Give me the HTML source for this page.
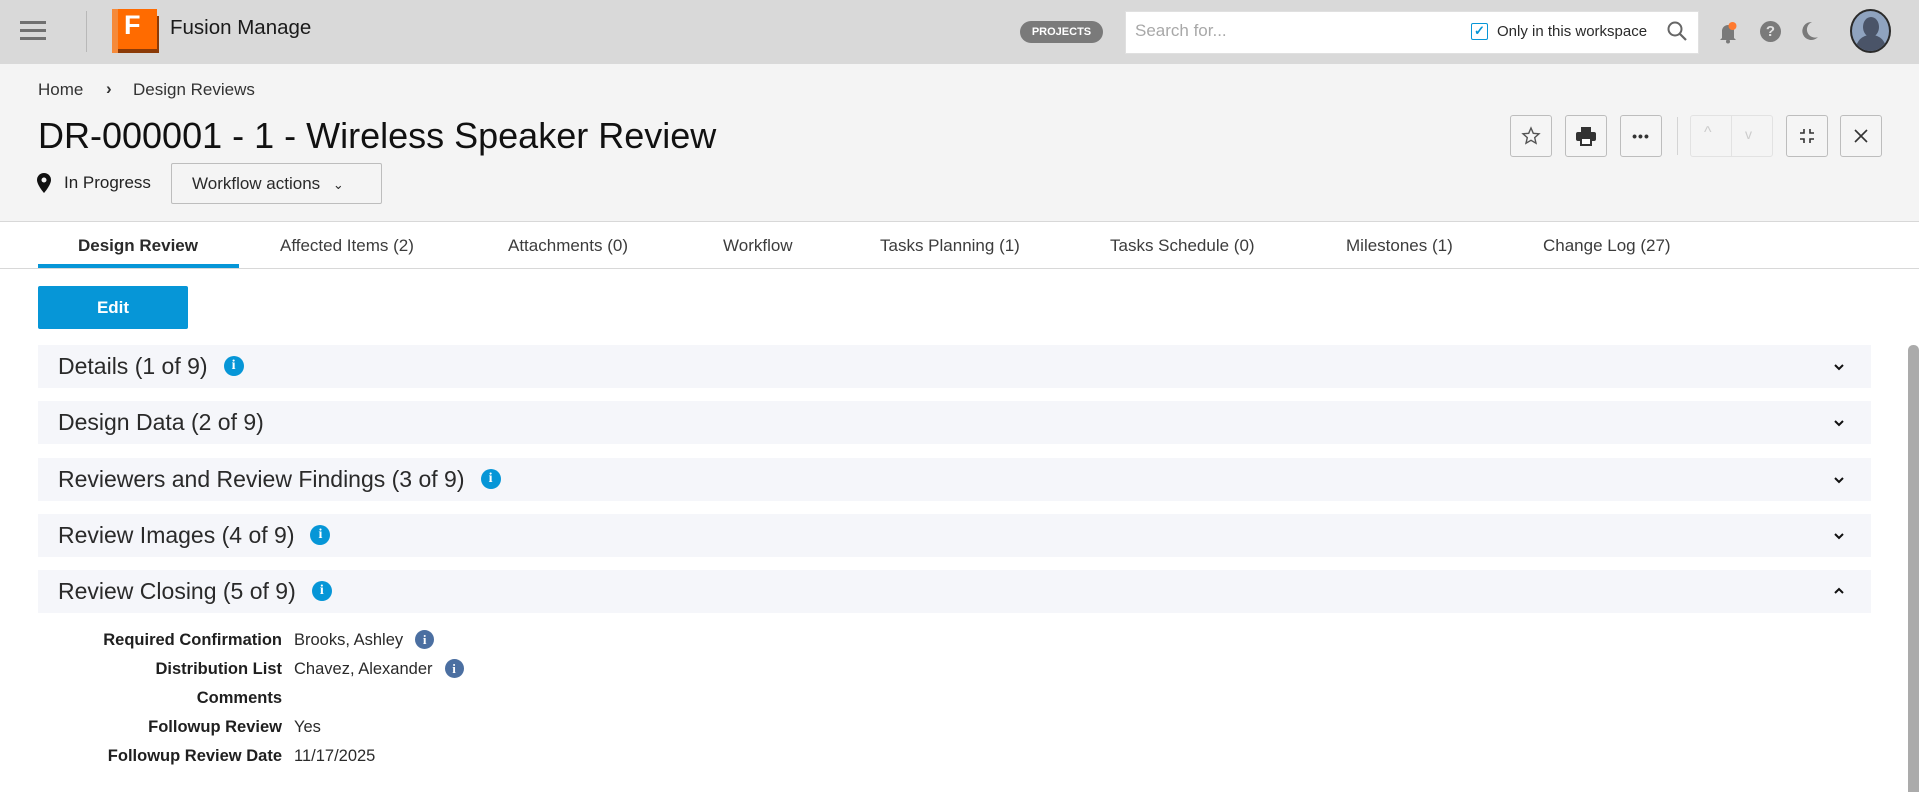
<!DOCTYPE html>
<html><head><meta charset="utf-8"><style>
*{box-sizing:border-box;margin:0;padding:0}
body{width:1919px;height:792px;overflow:hidden;background:#fff;font-family:"Liberation Sans",sans-serif;color:#1f1f1f;position:relative}
.a{position:absolute}
.top{left:0;top:0;width:1919px;height:64px;background:#d9d9d9}
.sub{left:0;top:64px;width:1919px;height:158px;background:#f4f4f4;border-bottom:1px solid #d8d8d8}
.btn{position:absolute;top:115px;width:42px;height:42px;border:1px solid #bdbdbd;border-radius:3px;background:#f5f5f5;display:flex;align-items:center;justify-content:center}
.tab{position:absolute;top:236px;font-size:17px;color:#3c3c3c;white-space:nowrap}
.sec{position:absolute;left:38px;width:1833px;height:43px;background:#f5f6fa;font-size:23px;color:#2a2a2a;padding-left:20px;line-height:43px;white-space:nowrap}
.info{display:inline-block;width:20px;height:20px;border-radius:50%;background:#0696d7;color:#fff;font-size:14px;font-weight:bold;line-height:20px;text-align:center;vertical-align:middle;margin-left:16px;margin-top:-4px;font-family:"Liberation Serif",serif}
.chev{position:absolute;left:1833px;width:12px;height:12px}
.lab{position:absolute;right:1637px;font-size:16.5px;line-height:20px;color:#1f1f1f;font-weight:bold;white-space:nowrap}
.val{position:absolute;left:294px;font-size:16.5px;line-height:20px;color:#2a2a2a;white-space:nowrap}
.di{display:inline-block;width:19px;height:19px;border-radius:50%;background:#4b6fa1;color:#fff;font-size:13px;font-weight:bold;line-height:19px;text-align:center;margin-left:12px;vertical-align:middle;margin-top:-3px;font-family:"Liberation Serif",serif}
</style></head><body>
<div class="a top"></div>
<div class="a" style="left:20px;top:21px;width:26px;height:3px;background:#707070;box-shadow:0 8px 0 #707070,0 16px 0 #707070"></div>
<div class="a" style="left:86px;top:11px;width:1px;height:41px;background:#b8b8b8"></div>
<div class="a" style="left:114px;top:16px;width:45px;height:37px;background:#8b3a07"></div>
<div class="a" style="left:112px;top:9px;width:45px;height:40px;background:#ff6b00"></div>
<div class="a" style="left:112px;top:9px;width:6px;height:44px;background:#f58a3a"></div>
<div class="a" style="left:124px;top:10px;font-size:27px;font-weight:bold;color:#fff">F</div>
<div class="a" style="left:170px;top:16px;font-size:20.5px;color:#1a1a1a">Fusion Manage</div>
<div class="a" style="left:1020px;top:21px;width:83px;height:22px;border-radius:11px;background:#7a7a7a;color:#fff;font-size:11px;font-weight:bold;text-align:center;line-height:22px">PROJECTS</div>
<div class="a" style="left:1125px;top:11px;width:574px;height:43px;background:#fff;border:1px solid #e0e0e0"></div>
<div class="a" style="left:1135px;top:21px;font-size:17px;color:#a8a8a8">Search for...</div>
<div class="a" style="left:1471px;top:23px;width:17px;height:17px;border:1.5px solid #0696d7;border-radius:2px;color:#0696d7;font-size:13px;line-height:14px;text-align:center;font-weight:bold">✓</div>
<div class="a" style="left:1497px;top:23px;font-size:15px;color:#2a2a2a">Only in this workspace</div>
<svg class="a" style="left:1666px;top:20px" width="22" height="22" viewBox="0 0 22 22"><circle cx="9" cy="9" r="6.5" fill="none" stroke="#666" stroke-width="2"/><path d="M14 14l6 6" stroke="#666" stroke-width="2.2"/></svg>
<svg class="a" style="left:1718px;top:20px" width="20" height="24" viewBox="0 0 20 24"><path d="M4 18V11a6 6 0 0 1 12 0v7l2 2H2z" fill="#7a7a7a"/><circle cx="10" cy="21.5" r="2" fill="#7a7a7a"/><circle cx="14.5" cy="6" r="4" fill="#ff7a2f"/></svg>
<div class="a" style="left:1760px;top:21px;width:21px;height:21px;border-radius:50%;background:#7a7a7a;color:#e0e0e0;font-size:15px;font-weight:bold;text-align:center;line-height:21px">?</div>
<svg class="a" style="left:1800px;top:20px" width="20" height="22" viewBox="0 0 20 22"><path d="M12 2a9 9 0 1 0 6 15A8 8 0 0 1 12 2z" fill="#7a7a7a"/></svg>
<div class="a" style="left:1850px;top:9px;width:41px;height:44px;border-radius:50%;background:#8fa3bf;border:2px solid #2a2a2a;overflow:hidden"><div style="position:absolute;left:11px;top:6px;width:16px;height:20px;border-radius:50%;background:#4a5468"></div><div style="position:absolute;left:4px;top:24px;width:30px;height:24px;border-radius:14px 14px 0 0;background:#4a5468"></div></div>

<div class="a sub"></div>
<div class="a" style="left:38px;top:80px;font-size:17px;color:#333">Home</div>
<div class="a" style="left:106px;top:79px;font-size:17px;color:#333;font-weight:bold">›</div>
<div class="a" style="left:133px;top:80px;font-size:17px;color:#333">Design Reviews</div>
<div class="a" style="left:38px;top:115px;font-size:36px;color:#111;white-space:nowrap">DR-000001 - 1 - Wireless Speaker Review</div>
<svg class="a" style="left:37px;top:173px" width="14" height="20" viewBox="0 0 14 20"><path d="M7 0a7 7 0 0 1 7 7c0 5-7 13-7 13S0 12 0 7a7 7 0 0 1 7-7z" fill="#111"/><circle cx="7" cy="7" r="2.5" fill="#f4f4f4"/></svg>
<div class="a" style="left:64px;top:173px;font-size:17px;color:#222">In Progress</div>
<div class="a" style="left:171px;top:163px;width:211px;height:41px;border:1px solid #bdbdbd;border-radius:2px;background:#f4f4f4;font-size:17px;color:#2a2a2a;padding:10px 0 0 20px">Workflow actions <span style="font-size:13px;margin-left:8px">⌄</span></div>

<div class="btn" style="left:1510px"><svg width="20" height="20" viewBox="0 0 20 20"><path d="M10 2l2.3 5.3 5.7.5-4.3 3.8 1.3 5.6L10 14.3 5 17.2l1.3-5.6L2 7.8l5.7-.5z" fill="none" stroke="#555" stroke-width="1.4"/></svg></div>
<div class="btn" style="left:1565px"><svg width="22" height="20" viewBox="0 0 22 20"><rect x="6" y="1" width="10" height="5" fill="#333"/><rect x="1" y="6" width="20" height="9" rx="2" fill="#333"/><rect x="6" y="12" width="10" height="7" fill="#fff" stroke="#333" stroke-width="2"/></svg></div>
<div class="btn" style="left:1620px;font-size:14px;font-weight:bold;letter-spacing:1px;color:#333">•••</div>
<div class="a" style="left:1677px;top:117px;width:1px;height:38px;background:#d4d4d4"></div>
<div class="a" style="left:1690px;top:115px;width:83px;height:42px;border:1px solid #e2e2e2;border-radius:3px"></div>
<div class="a" style="left:1731px;top:115px;width:1px;height:42px;background:#e2e2e2"></div>
<div class="a" style="left:1704px;top:124px;color:#ccc;font-size:16px">^</div>
<div class="a" style="left:1745px;top:126px;color:#ccc;font-size:14px">v</div>
<div class="btn" style="left:1786px"><svg width="16" height="16" viewBox="0 0 16 16"><path d="M5 1v4H1M11 1v4h4M5 15v-4H1M11 15v-4h4" fill="none" stroke="#333" stroke-width="1.6"/></svg></div>
<div class="btn" style="left:1840px"><svg width="16" height="16" viewBox="0 0 16 16"><path d="M2 2l12 12M14 2L2 14" stroke="#333" stroke-width="1.6"/></svg></div>

<div class="tab" style="left:78px;font-weight:bold;color:#2a2a2a">Design Review</div>
<div class="a" style="left:38px;top:264px;width:201px;height:4px;background:#0696d7"></div>
<div class="a" style="left:0;top:268px;width:1919px;height:1px;background:#d8d8d8"></div>
<div class="tab" style="left:280px">Affected Items (2)</div>
<div class="tab" style="left:508px">Attachments (0)</div>
<div class="tab" style="left:723px">Workflow</div>
<div class="tab" style="left:880px">Tasks Planning (1)</div>
<div class="tab" style="left:1110px">Tasks Schedule (0)</div>
<div class="tab" style="left:1346px">Milestones (1)</div>
<div class="tab" style="left:1543px">Change Log (27)</div>

<div class="a" style="left:38px;top:286px;width:150px;height:43px;background:#0696d7;border-radius:2px;color:#fff;font-size:17px;font-weight:bold;text-align:center;line-height:43px">Edit</div>

<div class="sec" style="top:345px">Details (1 of 9)<span class="info">i</span></div>
<div class="sec" style="top:401px">Design Data (2 of 9)</div>
<div class="sec" style="top:458px">Reviewers and Review Findings (3 of 9)<span class="info">i</span></div>
<div class="sec" style="top:514px">Review Images (4 of 9)<span class="info">i</span></div>
<div class="sec" style="top:570px">Review Closing (5 of 9)<span class="info">i</span></div>
<svg class="chev" style="top:361px" viewBox="0 0 12 12"><path d="M2 4l4 4 4-4" fill="none" stroke="#111" stroke-width="2"/></svg>
<svg class="chev" style="top:417px" viewBox="0 0 12 12"><path d="M2 4l4 4 4-4" fill="none" stroke="#111" stroke-width="2"/></svg>
<svg class="chev" style="top:474px" viewBox="0 0 12 12"><path d="M2 4l4 4 4-4" fill="none" stroke="#111" stroke-width="2"/></svg>
<svg class="chev" style="top:530px" viewBox="0 0 12 12"><path d="M2 4l4 4 4-4" fill="none" stroke="#111" stroke-width="2"/></svg>
<svg class="chev" style="top:585px" viewBox="0 0 12 12"><path d="M2 8l4-4 4 4" fill="none" stroke="#111" stroke-width="2"/></svg>

<div class="lab" style="top:630px">Required Confirmation</div><div class="val" style="top:630px">Brooks, Ashley<span class="di">i</span></div>
<div class="lab" style="top:659px">Distribution List</div><div class="val" style="top:659px">Chavez, Alexander<span class="di">i</span></div>
<div class="lab" style="top:688px">Comments</div>
<div class="lab" style="top:717px">Followup Review</div><div class="val" style="top:717px">Yes</div>
<div class="lab" style="top:746px">Followup Review Date</div><div class="val" style="top:746px">11/17/2025</div>

<div class="a" style="left:1908px;top:345px;width:11px;height:447px;background:#ababab;border-radius:5px 5px 0 0"></div>
</body></html>
